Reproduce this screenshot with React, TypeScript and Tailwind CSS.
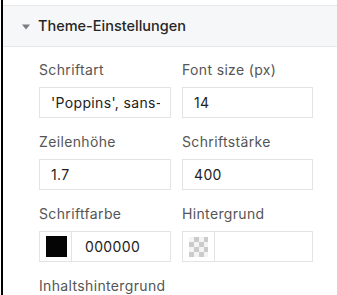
import type { ReactNode } from 'react'

function Field({ label, children }: { label: string; children: ReactNode }) {
  return (
    <div>
      <label className="mb-[7px] block h-5 text-[14px] leading-5 tracking-[0.35px] text-[#555]">{label}</label>
      {children}
    </div>
  )
}

function TextBox({ value }: { value: string }) {
  return (
    <input
      readOnly
      value={value}
      className="h-[31px] w-full border border-[#e2e3e5] bg-white pl-[11px] pr-[10px] text-[14px] tracking-[0.35px] text-[#222] outline-none"
    />
  )
}

function ColorBox({ value, swatch }: { value: string; swatch: 'black' | 'empty' }) {
  return (
    <div className="flex h-[31px] w-full border border-[#e2e3e5] bg-white">
      <div className="flex w-[32px] shrink-0 items-center justify-center border-r border-[#e2e3e5]">
        {swatch === 'black' ? (
          <div className="ml-px h-[21px] w-[21px] bg-[#050505]" />
        ) : (
          <div className="h-[20px] w-[19px] bg-[conic-gradient(#cbcbcb_25%,#f4f4f4_0_50%,#cbcbcb_0_75%,#f4f4f4_0)] bg-[length:10px_10px]" />
        )}
      </div>
      <span className="flex items-center pl-[13px] text-[14px] tracking-[0.35px] text-[#222]">{value}</span>
    </div>
  )
}

export default function App() {
  return (
    <div className="h-[295px] w-[337px] overflow-hidden bg-white pl-px font-['Inter',sans-serif]">
      <div className="h-full border-l-2 border-black pt-[5px]">
        <div className="flex h-[42px] items-center gap-[8px] border-y border-[#e6e7e9] bg-[#f6f7f9] pl-[19px]">
          <svg width="8" height="6" viewBox="0 0 8 6" className="mt-px">
            <path d="M0 0.5h8L4 5.5z" fill="#7a7d82" />
          </svg>
          <span className="text-[14.5px] font-medium text-[#262626]">Theme-Einstellungen</span>
        </div>
        <div className="grid grid-cols-[132px_131px] gap-x-[11px] gap-y-[14px] pl-[36px] pt-[13px]">
          <Field label="Schriftart">
            <TextBox value="'Poppins', sans-serif" />
          </Field>
          <Field label="Font size (px)">
            <TextBox value="14" />
          </Field>
          <Field label="Zeilenhöhe">
            <TextBox value="1.7" />
          </Field>
          <Field label="Schriftstärke">
            <TextBox value="400" />
          </Field>
          <Field label="Schriftfarbe">
            <ColorBox value="000000" swatch="black" />
          </Field>
          <Field label="Hintergrund">
            <ColorBox value="" swatch="empty" />
          </Field>
          <Field label="Inhaltshintergrund">
            <ColorBox value="" swatch="empty" />
          </Field>
        </div>
      </div>
    </div>
  )
}
